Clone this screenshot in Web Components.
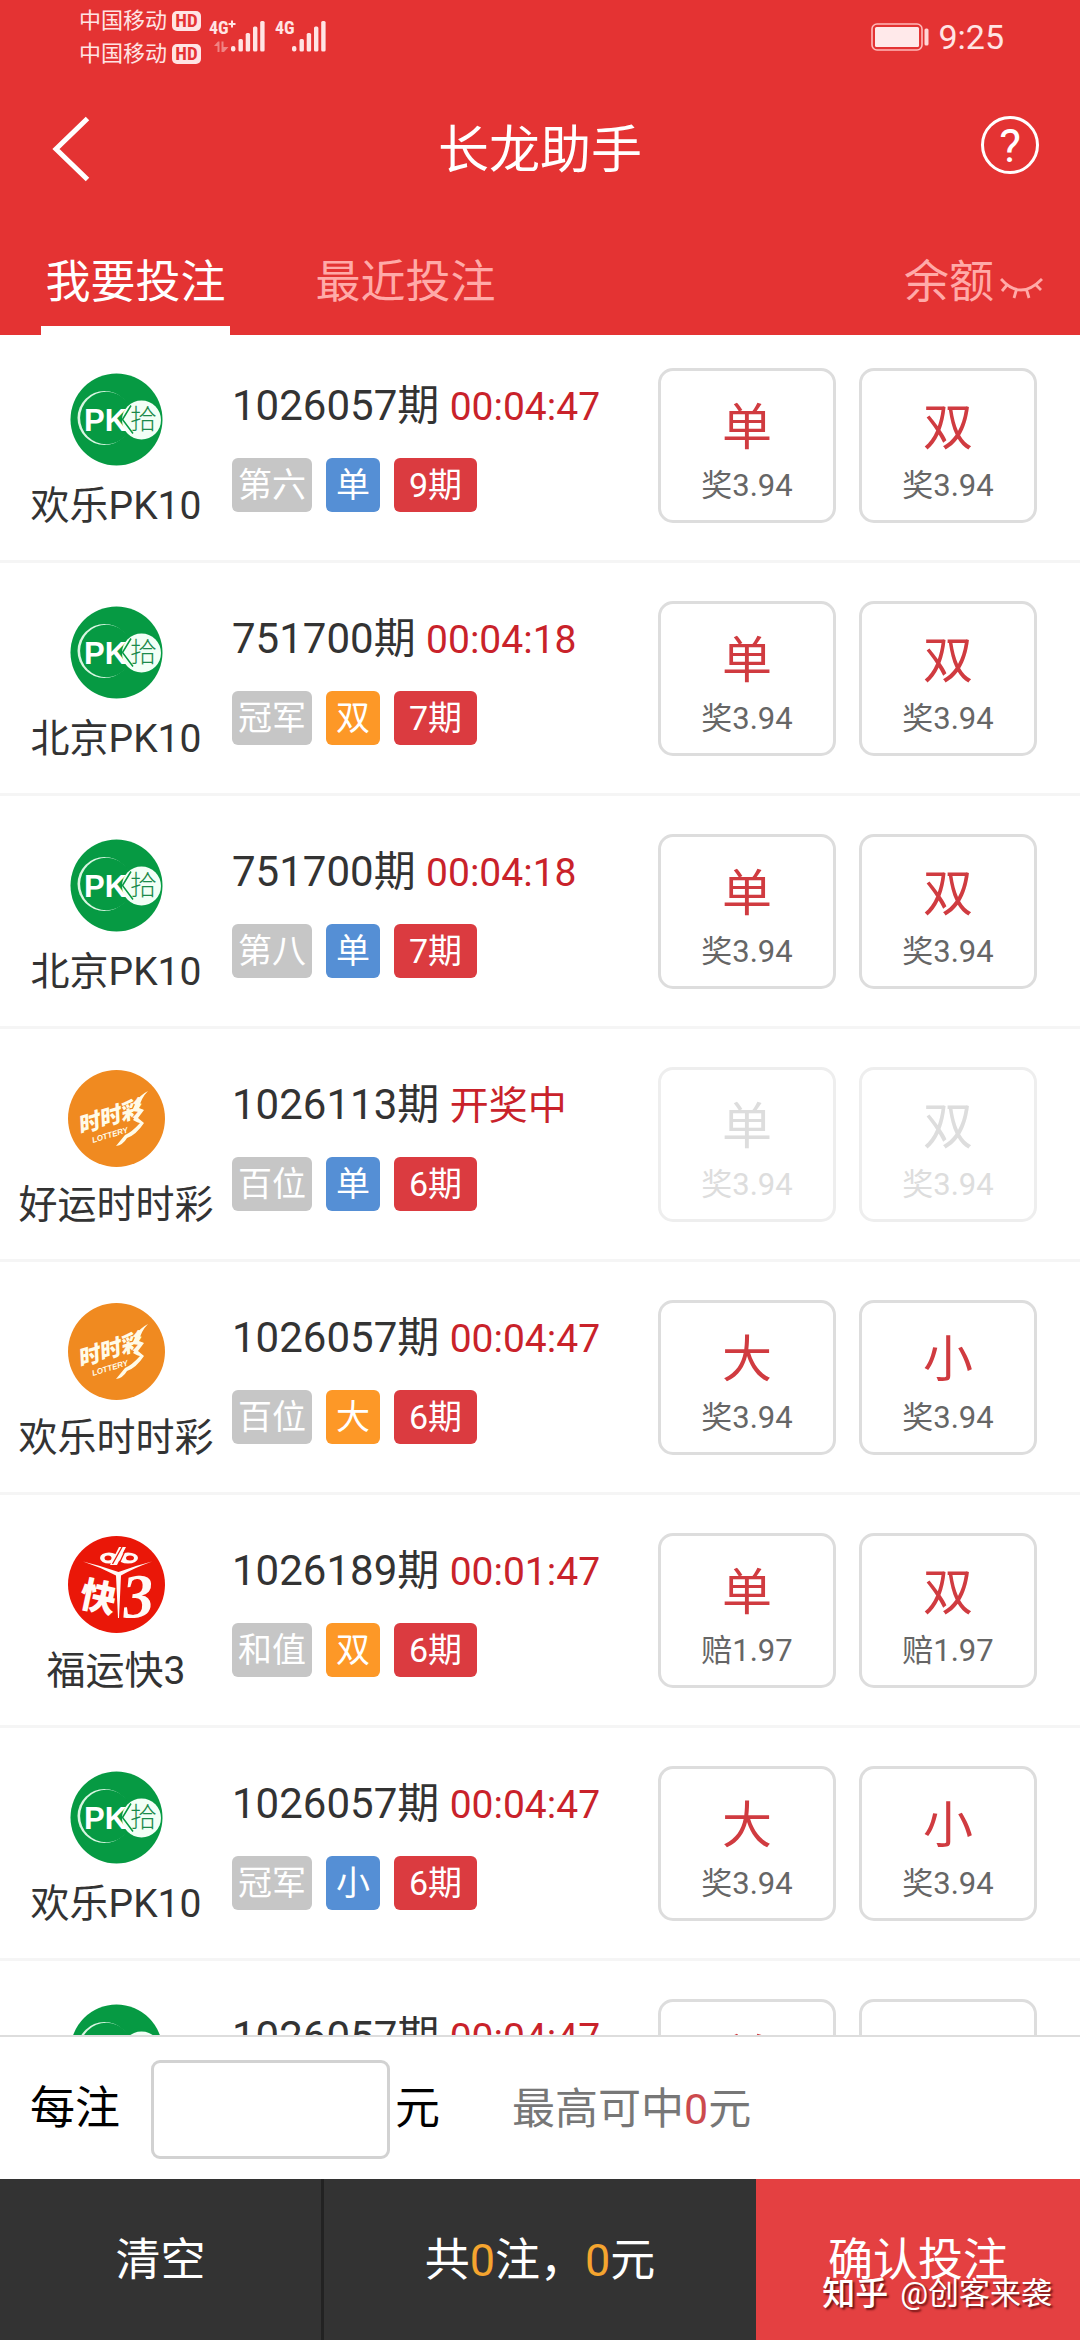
<!DOCTYPE html>
<html lang="zh-CN">
<head>
<meta charset="utf-8">
<meta name="viewport" content="width=device-width, initial-scale=1">
<title>长龙助手</title>
<style>
  html, body { margin: 0; height: 100%; }
  body { font-family: Roboto, "Noto Sans CJK SC", sans-serif; color: #333; background: #fff; }
</style>
</head>
<body>
<betting-app></betting-app>

<template id="t-app">
  <style>
    :host { display: flex; flex-direction: column; height: 100vh; position: relative; overflow: hidden; }
    header { background: #e43333; color: #fff; flex: none; }
    main { flex: 1; min-height: 0; overflow-y: auto; scrollbar-width: none; }
    footer { flex: none; }
  </style>
  <header>
    <status-bar></status-bar>
    <nav-bar>长龙助手</nav-bar>
    <tab-bar></tab-bar>
  </header>
  <main></main>
  <footer>
    <stake-bar></stake-bar>
    <action-bar></action-bar>
  </footer>
  <water-mark><b slot="site">知乎</b>@创客来袭</water-mark>
</template>

<template id="t-status">
  <style>
    :host { display: flex; justify-content: space-between; align-items: flex-start; height: 75px; padding: 0 76px 0 79px; color: #ffe4e4; box-sizing: border-box; }
    .left, .right, .line { display: flex; align-items: center; }
    .left { align-items: flex-start; }
    .carriers { display: flex; flex-direction: column; padding-top: 4px; font-size: 22px; line-height: 33px; }
    .line { gap: 5px; }
    .hd { width: 29px; height: 20px; line-height: 20px; border-radius: 5px; background: #ffe4e4; color: #e43333; font-size: 19px; font-weight: 700; text-align: center; font-family: "Roboto Condensed", "Liberation Sans Narrow", Roboto, sans-serif; }
    .sig1 { margin: 18px 0 0 8px; }
    .sig2 { margin: 18px 0 0 10px; }
    svg text { font: 700 18px "Roboto Condensed", "Liberation Sans Narrow", Roboto, sans-serif; }
    .right { gap: 9px; font-size: 34px; line-height: 74px; }
  </style>
  <div class="left">
    <div class="carriers">
      <div class="line"><span>中国移动</span><span class="hd">HD</span></div>
      <div class="line"><span>中国移动</span><span class="hd">HD</span></div>
    </div>
    <svg class="sig1" width="56" height="34" viewBox="0 0 56 34" fill="#ffe4e4">
      <text x="0" y="16">4G</text>
      <path d="M19.500 5h2.500V2.500h2V5H26.500v2h-2.500v2.500h-2V7H19.500z"/>
      <g opacity=".45"><path d="M5 28l4-4.500h1.500V34H8.500v-6zM12.500 23.500h2V29h5L15 34h-2.500z"/></g>
      <rect x="22" y="28" width="4.400" height="5.500" rx="2"/><rect x="29.500" y="21" width="4.400" height="12.500" rx="1.500"/><rect x="36.700" y="15" width="4.400" height="18.500" rx="1.500"/><rect x="44" y="8.500" width="4.400" height="25" rx="1.500"/><rect x="51.200" y="3" width="4.400" height="30.500" rx="1.500"/>
    </svg>
    <svg class="sig2" width="51" height="34" viewBox="0 0 51 34" fill="#ffe4e4">
      <text x="0" y="16">4G</text>
      <rect x="17" y="28" width="4.400" height="5.500" rx="2"/><rect x="24.500" y="21" width="4.400" height="12.500" rx="1.500"/><rect x="31.700" y="15" width="4.400" height="18.500" rx="1.500"/><rect x="39" y="8.500" width="4.400" height="25" rx="1.500"/><rect x="46.200" y="3" width="4.400" height="30.500" rx="1.500"/>
    </svg>
  </div>
  <div class="right">
    <svg width="58" height="28" viewBox="0 0 58 28"><rect x="1" y="1" width="50" height="26" rx="5" fill="none" stroke="#ffb9b9" stroke-width="1.600"/><rect x="4" y="4" width="44" height="20" rx="1.500" fill="#ffe9ea"/><rect x="53.500" y="5.500" width="4" height="17" rx="1.500" fill="#ffd5d5"/></svg>
    <span>9:25</span>
  </div>
</template>

<template id="t-nav">
  <style>
    :host { display: grid; grid-template-columns: 1fr auto 1fr; align-items: center; height: 148px; padding: 0 41px; }
    button { all: unset; display: block; line-height: 0; cursor: pointer; }
    .back { padding-left: 10px; }
    .help { justify-self: end; margin-bottom: 8px; width: 58px; height: 58px; box-sizing: border-box; border: 3px solid #fff; border-radius: 50%; text-align: center; font-size: 46px; line-height: 54px; }
    h1 { margin: 0; padding-top: 4px; font-size: 51px; line-height: 60px; font-weight: 400; }
  </style>
  <button class="back" aria-label="返回"><svg width="40" height="66" viewBox="0 0 40 66"><path d="M36.500 2.500L5 33l31.500 30.500" fill="none" stroke="#fff" stroke-width="5"/></svg></button>
  <h1><slot></slot></h1>
  <button class="help">?</button>
</template>

<template id="t-tabs">
  <style>
    :host { display: flex; justify-content: space-between; height: 112px; padding: 0 37px 0 41px; font-size: 45px; line-height: 120px; }
    nav { display: flex; gap: 81px; }
    a { color: #ffaaa8; text-decoration: none; width: 189px; text-align: center; box-sizing: border-box; height: 112px; }
    a.on { color: #fff; border-bottom: 9px solid #fff; }
    button { all: unset; display: flex; align-items: center; gap: 6px; color: #ffaaa8; cursor: pointer; height: 120px; }
    svg { margin-top: 12px; }
  </style>
  <nav><a class="on" href="#bet">我要投注</a><a href="#recent">最近投注</a></nav>
  <button>余额<svg width="43" height="24" viewBox="0 0 43 24" fill="none" stroke="#ffaaa8" stroke-width="2.800"><path d="M1 2Q20.500 24 42 2M7 8l-5 6M36 8l5 5M16.500 12.500L14 21M26.500 12.500L29 21"/></svg></button>
</template>

<template id="t-row">
  <style>
    :host { display: flex; align-items: flex-start; height: 233px; box-sizing: border-box; border-bottom: 3px solid #f5f5f5; padding-right: 43px; }
    .game { width: 232px; flex: none; display: flex; flex-direction: column; align-items: center; gap: 13px; padding-top: 41px; font-size: 39px; line-height: 50px; white-space: nowrap; }
    .info { flex: 1; padding-top: 46px; font-size: 42px; line-height: 60px; white-space: nowrap; }
    time { font-size: 39px; color: #c9222a; }
    .tags { display: flex; gap: 14px; margin-top: 21px; }
    .options { display: flex; gap: 23px; padding-top: 38px; }
  </style>
  <div class="game"><slot name="logo"></slot><span class="name"></span></div>
  <div class="info"><div><span class="issue"></span> <time></time></div><div class="tags"><slot></slot></div></div>
  <div class="options"><slot name="option"></slot></div>
</template>

<template id="t-tag">
  <style>
    :host { display: block; height: 54px; line-height: 54px; font-size: 34px; color: #fff; border-radius: 6px; background: #c6c6c6; padding: 0 6px; }
    :host([kind="blue"]) { background: #558fd5; padding: 0 10px; }
    :host([kind="orange"]) { background: #fd9827; padding: 0 10px; }
    :host([kind="red"]) { background: #db3b40; padding: 0 15px; }
  </style><slot></slot>
</template>

<template id="t-option">
  <style>
    :host { display: block; }
    button { width: 178px; height: 155px; box-sizing: border-box; border: 3px solid #ddd; border-radius: 15px; background: #fff; padding: 27px 0 0; margin: 0; font: inherit; display: flex; flex-direction: column; align-items: center; gap: 8px; }
    .pick { font-size: 50px; line-height: 60px; color: #d03b40; }
    .odds { font-size: 31px; line-height: 40px; color: #666; }
    button:disabled { border-color: #eee; }
    button:disabled span { color: #ddd; }
  </style>
  <button><span class="pick"></span><span class="odds"></span></button>
</template>

<template id="t-stake">
  <style>
    :host { display: flex; align-items: center; height: 144px; box-sizing: border-box; border-top: 2px solid #ddd; padding: 2px 30px 0; font-size: 45px; line-height: 60px; color: #000; background: #fff; }
    input { width: 239px; height: 99px; box-sizing: border-box; border: 3px solid #d2d2d2; border-radius: 9px; margin: 0 5px 0 31px; padding: 0 16px; font: inherit; background: #fff; }
    p { margin: 0 0 0 72px; font-size: 43px; color: #777; }
    b { font-weight: 400; color: #cc4a4e; }
  </style>
  <label for="stake">每注</label><input id="stake" inputmode="numeric"><span>元</span>
  <p>最高可中<b>0</b>元</p>
</template>

<template id="t-actions">
  <style>
    :host { display: grid; grid-template-columns: 3fr 4fr 3fr; height: 161px; background: #333; color: #fff; font-size: 45px; }
    button, div { all: unset; display: flex; align-items: center; justify-content: center; box-sizing: border-box; padding-bottom: 6px; }
    .clear { border-right: 3px solid #222; }
    .go { background: #e44041; }
    b { font-weight: 400; color: #f5a52f; }
  </style>
  <button class="clear">清空</button>
  <div><span>共<b>0</b>注，<b>0</b>元</span></div>
  <button class="go">确认投注</button>
</template>

<template id="t-mark">
  <style>
    :host { position: absolute; right: 28px; bottom: 26px; display: flex; align-items: center; gap: 12px; color: #fff; font-size: 31px; line-height: 40px; text-shadow: 2px 2px 2px rgba(60,0,0,.7); pointer-events: none; }
    ::slotted(b) { font-size: 33px; font-weight: 500; }
  </style>
  <slot name="site"></slot><span><slot></slot></span>
</template>

<template id="logo-pk">
  <svg width="97" height="97" viewBox="0 0 97 97">
    <circle cx="48.500" cy="48.500" r="46" fill="#069a43"/>
    <circle cx="36.500" cy="47" r="27" fill="#d9f6e2"/>
    <circle cx="38.300" cy="47" r="26.200" fill="#069a43"/>
    <circle cx="73.500" cy="49" r="19.500" fill="#f2fff6"/>
    <text x="16" y="59.500" font-family="Liberation Sans" font-weight="700" font-size="31" fill="#fff">PK</text>
    <path d="M63 34.500L54.500 48.500 65 62.500" fill="none" stroke="#069a43" stroke-width="1.500"/>
    <text x="62" y="58" font-family="Noto Sans CJK SC" font-weight="300" font-size="27" fill="#1b8a4b">拾</text>
  </svg>
</template>
<template id="logo-ssc">
  <svg width="97" height="97" viewBox="0 0 97 97">
    <circle cx="48.500" cy="48.500" r="48.500" fill="#f08a20"/>
    <g fill="#fffbe8">
      <text transform="translate(12 64) rotate(-17)" font-family="Noto Sans CJK SC" font-weight="900" font-style="italic" font-size="22">时时彩</text>
      <text transform="translate(25 73) rotate(-17)" font-family="Liberation Sans" font-weight="700" font-style="italic" font-size="8">LOTTERY</text>
      <path d="M80 21Q72 25 68 32L64 41 71 42 65 50Q70 53 72 53Q64 62 57 65L48 76Q55 75 59 68Q68 65 76 53L70 48 76 40 71 38Q73 28 80 21z"/>
    </g>
  </svg>
</template>
<template id="logo-k3">
  <svg width="97" height="97" viewBox="0 0 97 97">
    <circle cx="48.500" cy="48.500" r="48.500" fill="#ea1708"/>
    <g fill="#fffaf6">
      <path d="M15 25.500Q34 30 50.500 36Q66 30 84 25.500Q66 32 53 39.500L51 82h-1L48 39.500Q32 31 15 25.500z"/>
      <ellipse cx="41" cy="22" rx="9" ry="5.500"/><ellipse cx="60" cy="22" rx="10" ry="5.500"/>
      <ellipse cx="40" cy="22" rx="3.500" ry="2.500" fill="#ea1708"/><ellipse cx="62" cy="22" rx="4" ry="2.500" fill="#ea1708"/>
      <path d="M51 11h7L49 29h-7z"/>
      <path d="M54 11L44.500 28M58 13L50 30" stroke="#ea1708" stroke-width="1.300" fill="none"/>
      <text transform="translate(10 70) rotate(12)" font-family="Noto Sans CJK SC" font-weight="900" font-size="36">快</text>
      <text transform="translate(56 82) rotate(-4)" font-family="Liberation Serif" font-weight="700" font-style="italic" font-size="62">3</text>
    </g>
  </svg>
</template>

<script>
  const clone = id => document.getElementById(id).content.cloneNode(true);

  class BaseElement extends HTMLElement {
    constructor() {
      super();
      this.attachShadow({ mode: 'open' }).append(clone(this.constructor.template));
    }
    $(selector) { return this.shadowRoot.querySelector(selector); }
  }
  const define = (name, template, body = {}) => {
    const C = class extends BaseElement {};
    C.template = template;
    Object.assign(C.prototype, body);
    customElements.define(name, C);
  };

  define('status-bar', 't-status');
  define('nav-bar', 't-nav');
  define('tab-bar', 't-tabs');
  define('stake-bar', 't-stake');
  define('action-bar', 't-actions');
  define('water-mark', 't-mark');
  define('tag-chip', 't-tag');

  customElements.define('game-logo', class extends HTMLElement {
    connectedCallback() {
      if (this.shadowRoot) return;
      const style = document.createElement('style');
      style.textContent = ':host { display: block; height: 97px } svg { display: block }';
      this.attachShadow({ mode: 'open' }).append(style, clone('logo-' + this.getAttribute('kind')));
    }
  });

  define('bet-option', 't-option', {
    connectedCallback() {
      this.$('.pick').textContent = this.getAttribute('pick');
      this.$('.odds').textContent = this.getAttribute('odds');
      this.$('button').disabled = this.hasAttribute('disabled');
    }
  });

  define('bet-row', 't-row', {
    connectedCallback() {
      for (const key of ['name', 'issue']) this.$('.' + key).textContent = this.getAttribute(key);
      this.$('time').textContent = this.getAttribute('countdown');
    }
  });

  const rows = [
    ['pk', '欢乐PK10', '1026057期', '00:04:47', '第六', '单', 'blue', '9期', '单双', '奖3.94'],
    ['pk', '北京PK10', '751700期', '00:04:18', '冠军', '双', 'orange', '7期', '单双', '奖3.94'],
    ['pk', '北京PK10', '751700期', '00:04:18', '第八', '单', 'blue', '7期', '单双', '奖3.94'],
    ['ssc', '好运时时彩', '1026113期', '开奖中', '百位', '单', 'blue', '6期', '单双', '奖3.94'],
    ['ssc', '欢乐时时彩', '1026057期', '00:04:47', '百位', '大', 'orange', '6期', '大小', '奖3.94'],
    ['k3', '福运快3', '1026189期', '00:01:47', '和值', '双', 'orange', '6期', '单双', '赔1.97'],
    ['pk', '欢乐PK10', '1026057期', '00:04:47', '冠军', '小', 'blue', '6期', '大小', '奖3.94'],
    ['pk', '', '1026057期', '00:04:47', '', '', '', '', '单双', '']
  ];

  define('betting-app', 't-app', {
    connectedCallback() {
      const list = this.$('main');
      list.innerHTML = rows.map(([logo, name, issue, time, place, side, color, run, picks, odds]) => `
        <bet-row name="${name}" issue="${issue}" countdown="${time}">
          <game-logo slot="logo" kind="${logo}"></game-logo>
          ${place && `<tag-chip>${place}</tag-chip><tag-chip kind="${color}">${side}</tag-chip><tag-chip kind="red">${run}</tag-chip>`}
          ${[...picks].map(p => `<bet-option slot="option" pick="${p}" odds="${odds}" ${time.includes(':') ? '' : 'disabled'}></bet-option>`).join('')}
        </bet-row>`).join('');
      list.scrollTop = 5;
    }
  });
</script>
</body>
</html>
